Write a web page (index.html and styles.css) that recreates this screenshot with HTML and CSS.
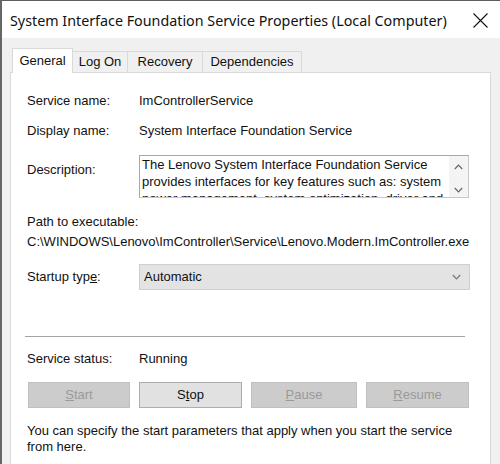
FILE: index.html
```html
<!DOCTYPE html>
<html>
<head>
<meta charset="utf-8">
<link rel="stylesheet" href="styles.css">
</head>
<body>
<div class="window">
  <div class="titlebar">
    <span class="title">System Interface Foundation Service Properties (Local Computer)</span>
    <svg class="close" width="15" height="15" viewBox="0 0 15 15"><path d="M0.5 0.5 L14.5 14.5 M14.5 0.5 L0.5 14.5" stroke="#111" stroke-width="1.1" fill="none"/></svg>
  </div>
  <div class="client">
    <div class="tabs">
      <div class="tab sel t-general">General</div>
      <div class="tab t-logon">Log On</div>
      <div class="tab t-recovery">Recovery</div>
      <div class="tab t-deps">Dependencies</div>
    </div>
    <div class="panel">
      <div class="row r-name"><span class="label">Service name:</span><span>ImControllerService</span></div>
      <div class="row r-display"><span class="label">Display name:</span><span>System Interface Foundation Service</span></div>
      <div class="row r-desc">
        <span class="label desc-label">Description:</span>
        <div class="textbox">
          <div class="tb-text">The Lenovo System Interface Foundation Service<br>provides interfaces for key features such as: system<br>power management, system optimization, driver and</div>
          <div class="tb-scroll">
            <svg width="9" height="6" viewBox="0 0 9 6"><path d="M0.8 5 L4.5 1.2 L8.2 5" stroke="#666" stroke-width="1.2" fill="none"/></svg>
            <svg width="9" height="6" viewBox="0 0 9 6"><path d="M0.8 1 L4.5 4.8 L8.2 1" stroke="#666" stroke-width="1.2" fill="none"/></svg>
          </div>
        </div>
      </div>
      <div class="path-label">Path to executable:</div>
      <div class="path">C:\WINDOWS\Lenovo\ImController\Service\Lenovo.Modern.ImController.exe</div>
      <div class="row r-startup">
        <span class="label">Startup typ<u>e</u>:</span>
        <div class="combo"><span>Automatic</span>
          <svg width="9" height="6" viewBox="0 0 9 6"><path d="M0.8 1 L4.5 4.8 L8.2 1" stroke="#777" stroke-width="1.2" fill="none"/></svg>
        </div>
      </div>
      <div class="sep"></div>
      <div class="row r-status"><span class="label">Service status:</span><span>Running</span></div>
      <div class="buttons">
        <div class="btn disabled b-start"><u>S</u>tart</div>
        <div class="btn b-stop">S<u>t</u>op</div>
        <div class="btn disabled b-pause"><u>P</u>ause</div>
        <div class="btn disabled b-resume"><u>R</u>esume</div>
      </div>
      <p class="note">You can specify the start parameters that apply when you start the service<br>from here.</p>
    </div>
  </div>
</div>
</body>
</html>
```
FILE: styles.css
```css
html, body {
  margin: 0;
  padding: 0;
}
body {
  width: 500px;
  height: 464px;
  overflow: hidden;
  background: #f0f0f0;
  font-family: "Liberation Sans", Arial, sans-serif;
  font-size: 13px;
  color: #111;
}
.window {
  height: 463px;
  border-top: 1px solid #5e5e5e;
  border-left: 2px solid #666;
  background: #f0f0f0;
  overflow: hidden;
}
.titlebar {
  height: 37px;
  background: #fff;
  display: flex;
  align-items: center;
  justify-content: space-between;
  padding: 1px 12px 0 8px;
  box-sizing: border-box;
}
.title {
  font-family: "Noto Sans", "Open Sans", sans-serif;
  font-size: 14.3px;
  color: #111;
  white-space: nowrap;
}
.close {
  display: block;
}
.client {
  padding: 10px 0 0 8px;
}
.tabs {
  display: flex;
  align-items: flex-end;
  height: 24px;
  padding-left: 2px;
}
.tab {
  box-sizing: border-box;
  height: 21px;
  line-height: 20px;
  text-align: center;
  background: #f0f0f0;
  border: 1px solid #d9d9d9;
  border-bottom: none;
  white-space: nowrap;
}
.tab.sel {
  height: 25px;
  line-height: 23px;
  background: #fff;
  margin-bottom: -1px;
  position: relative;
  z-index: 1;
}
.t-general { width: 61px; }
.t-logon { width: 55px; border-left: none; }
.t-recovery { width: 75px; border-left: none; }
.t-deps { width: 99px; border-left: none; }
.panel {
  box-sizing: border-box;
  width: 481px;
  height: 400px;
  background: #fff;
  border: 1px solid #d9d9d9;
  padding: 20px 0 0 16px;
}
.row {
  display: flex;
  align-items: flex-start;
  line-height: 16px;
  white-space: nowrap;
}
.label {
  width: 112px;
  flex: none;
}
.r-display { margin-top: 14px; }
.r-desc { margin-top: 16px; }
.desc-label { margin-top: 7px; }
.textbox {
  box-sizing: border-box;
  width: 330px;
  height: 43px;
  border: 1px solid #c8c8c8;
  border-top-color: #a8a8a8;
  border-left-color: #a8a8a8;
  display: flex;
  overflow: hidden;
}
.tb-text {
  flex: 1;
  padding-left: 2px;
  line-height: 17px;
  white-space: nowrap;
  overflow: hidden;
}
.tb-scroll {
  width: 19px;
  flex: none;
  background: #f4f4f4;
  display: flex;
  flex-direction: column;
  align-items: center;
  justify-content: space-between;
  padding: 8px 0 4px;
  box-sizing: border-box;
}
.tb-scroll svg { display: block; }
.path-label {
  margin-top: 16px;
  line-height: 16px;
}
.path {
  margin-top: 4px;
  line-height: 16px;
  width: 442px;
  white-space: nowrap;
  overflow: hidden;
}
.r-startup {
  margin-top: 14px;
  align-items: center;
}
.combo {
  box-sizing: border-box;
  width: 331px;
  height: 26px;
  background: #e3e3e3;
  border: 1px solid #cfcfcf;
  display: flex;
  align-items: center;
  justify-content: space-between;
  padding: 0 8px 0 4px;
}
.combo svg { display: block; }
.sep {
  margin-top: 46px;
  margin-left: -2px;
  width: 440px;
  height: 0;
  border-top: 1px solid #a3a3a3;
}
.r-status { margin-top: 14px; }
.buttons {
  display: flex;
  gap: 9px;
  margin-top: 15px;
  margin-left: 1px;
}
.btn {
  box-sizing: border-box;
  height: 26px;
  line-height: 24px;
  text-align: center;
  background: #e1e1e1;
  border: 1px solid #adadad;
  color: #111;
}
.btn.disabled {
  background: #cccccc;
  border-color: #bfbfbf;
  color: #9a9a9a;
}
.b-start { width: 102px; }
.b-stop { width: 103px; }
.b-pause { width: 106px; }
.b-resume { width: 103px; }
.note {
  margin: 15px 0 0;
  line-height: 16px;
  white-space: nowrap;
}
```
